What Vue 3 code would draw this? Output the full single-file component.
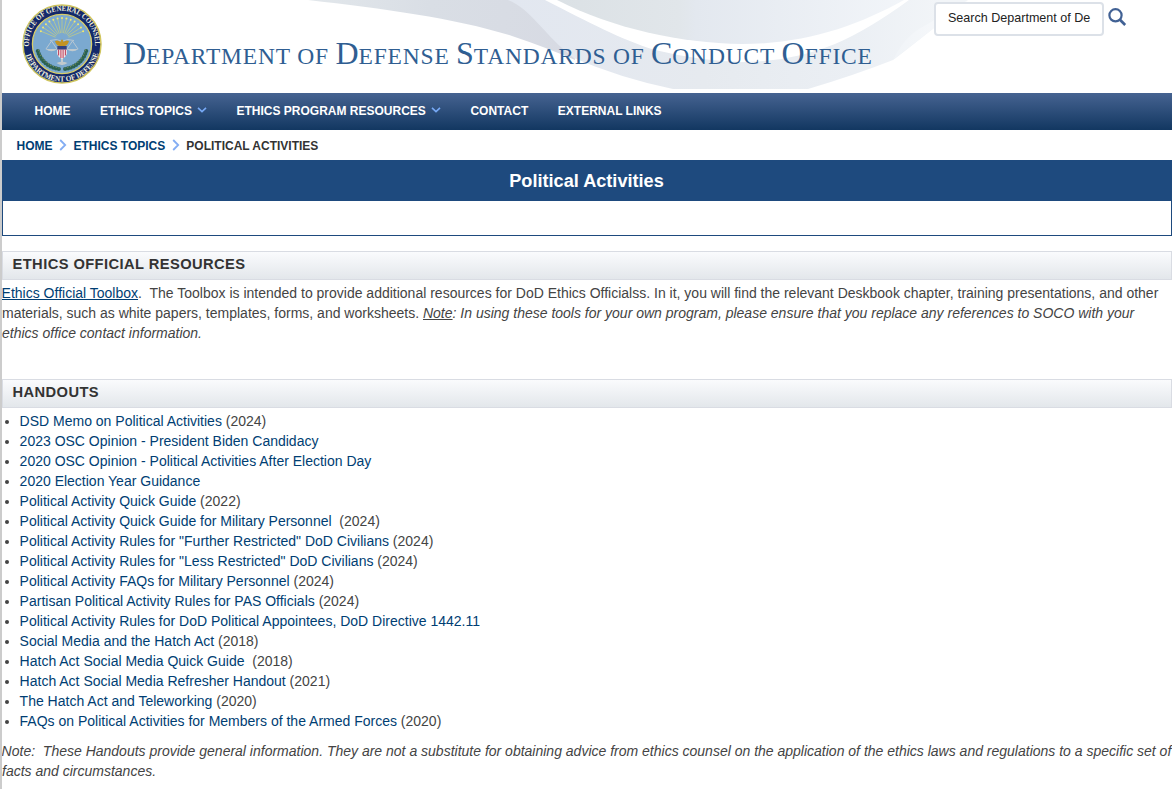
<script setup>
const nav = [
  { label: 'HOME' },
  { label: 'ETHICS TOPICS', menu: true },
  { label: 'ETHICS PROGRAM RESOURCES', menu: true },
  { label: 'CONTACT' },
  { label: 'EXTERNAL LINKS' },
]
const titleWords = [
  ['D', 'epartment'], ['', 'of'], ['D', 'efense'], ['S', 'tandards'], ['', 'of'], ['C', 'onduct'], ['O', 'ffice'],
]
const handouts = [
  ['DSD Memo on Political Activities', ' (2024)'],
  ['2023 OSC Opinion - President Biden Candidacy', ''],
  ['2020 OSC Opinion - Political Activities After Election Day', ''],
  ['2020 Election Year Guidance', ''],
  ['Political Activity Quick Guide', ' (2022)'],
  ['Political Activity Quick Guide for Military Personnel', '\u00a0 (2024)'],
  ['Political Activity Rules for "Further Restricted" DoD Civilians', ' (2024)'],
  ['Political Activity Rules for "Less Restricted" DoD Civilians', ' (2024)'],
  ['Political Activity FAQs for Military Personnel', ' (2024)'],
  ['Partisan Political Activity Rules for PAS Officials', ' (2024)'],
  ['Political Activity Rules for DoD Political Appointees, DoD Directive 1442.11', ''],
  ['Social Media and the Hatch Act', ' (2018)'],
  ['Hatch Act Social Media Quick Guide', '\u00a0 (2018)'],
  ['Hatch Act Social Media Refresher Handout', ' (2021)'],
  ['The Hatch Act and Teleworking', ' (2020)'],
  ['FAQs on Political Activities for Members of the Armed Forces', ' (2020)'],
]
const rays = Array.from({ length: 13 }, (_, i) => {
  const a = Math.PI * (1.13 + (i * 0.74) / 12)
  return {
    x1: 40 + 7 * Math.cos(a), y1: 36 + 7 * Math.sin(a),
    x2: 40 + 23 * Math.cos(a), y2: 36 + 22 * Math.sin(a),
  }
})
const leaves = Array.from({ length: 11 }, (_, i) => {
  const a = Math.PI * (0.54 + i * 0.037)
  return { x: 25.2 * Math.cos(a), y: 40 + 25.2 * Math.sin(a) }
})
</script>

<template>
  <div class="page">
    <header class="banner">
      <svg class="swoosh" width="700" height="93" viewBox="300 0 700 93">
        <defs>
          <linearGradient id="dark" x1="308" x2="575" y1="0" y2="40" gradientUnits="userSpaceOnUse">
            <stop offset="0" stop-color="#e2e7eb" /><stop offset=".45" stop-color="#d9dee5" /><stop offset="1" stop-color="#d7dae3" />
          </linearGradient>
          <linearGradient id="band" x1="510" x2="940" y1="0" y2="0" gradientUnits="userSpaceOnUse">
            <stop offset="0" stop-color="#e2e7f0" /><stop offset=".45" stop-color="#e6eaef" /><stop offset=".8" stop-color="#ebeff4" /><stop offset="1" stop-color="#f2f5f8" />
          </linearGradient>
          <linearGradient id="bowl" x1="557" x2="905" y1="0" y2="0" gradientUnits="userSpaceOnUse">
            <stop offset="0" stop-color="#dbe1e5" /><stop offset=".35" stop-color="#e1e6ea" /><stop offset=".4" stop-color="#e3e8ef" /><stop offset="1" stop-color="#f2f5f9" />
          </linearGradient>
          <linearGradient id="fade" x1="880" x2="968" y1="0" y2="0" gradientUnits="userSpaceOnUse">
            <stop offset="0" stop-color="#eff3f7" /><stop offset="1" stop-color="#f9fafc" />
          </linearGradient>
        </defs>
        <path d="M308 0C385 9 455 18 512 36Q545 47 575 60L572 30L512 0Z" fill="url(#dark)" />
        <path d="M508 0C530 8 545 36 574 58Q620 78 673 89H808Q855 75 893 60Q900 55 934 28L968 0Z" fill="url(#band)" />
        <path d="M893 60Q905 35 926 25L968 0L934 28Z" fill="url(#fade)" />
        <path d="M545 0C590 23 620 39 655 50Q700 61 742 62Q792 62 835 44Q868 30 909 0Z" fill="#fff" />
        <path d="M557 0C614 29 680 43 742 44C805 44 857 26 904 0Z" fill="url(#bowl)" />
      </svg>

      <svg class="seal" width="82" height="82" viewBox="-1 -1 82 82">
        <defs>
          <path id="topArc" d="M7.2 44A33.05 33.05 0 1 1 72.8 44" />
          <path id="bottomArc" d="M3.6 50A37.8 37.8 0 0 0 76.4 50" />
        </defs>
        <circle cx="40" cy="40" r="39" fill="#14296b" stroke="#cfc55e" stroke-width="1.5" />
        <circle cx="40" cy="40" r="29.6" fill="#7ba9d0" stroke="#d9ce69" stroke-width="1.3" />
        <line v-for="(r, i) in rays" :key="i" v-bind="r" class="ray" />
        <circle v-for="(r, i) in rays" :key="'s' + i" :cx="r.x2" :cy="r.y2" r="1" fill="#f5ea6c" />
        <g v-for="(l, i) in leaves" :key="'l' + i" fill="#2c6252">
          <circle :cx="40 + l.x" :cy="l.y" r="2.1" />
          <circle :cx="40 - l.x" :cy="l.y" r="2.1" />
          <circle :cx="40 + l.x * 0.97" :cy="l.y - 1" r=".6" fill="#86945a" />
          <circle :cx="40 - l.x * 0.97" :cy="l.y - 1" r=".6" fill="#86945a" />
        </g>
        <g fill="none" stroke="#c0cbd2" stroke-width=".9">
          <path d="M28 36.5Q34 34.5 40 37Q46 34.5 52 36.5M29.5 37L24 45M29.5 37L35 45M50.5 37L45 45M50.5 37L56 45" />
          <path d="M40 54V61" stroke-width="2" />
        </g>
        <path d="M23.5 45H35.5Q29.5 49.5 23.5 45M44.5 45H56.5Q50.5 49.5 44.5 45M34.5 59Q40 56.5 45.5 59Q40 63 34.5 59" fill="#c0c9cd" />
        <path d="M33 37Q36 35.5 38.5 38L39 36Q40 35 41 36L41.5 38Q44 35.5 47 37Q46 41 43 42H37Q34 41 33 37" fill="#c39322" />
        <path d="M35.2 42H44.8V50Q44 53 40 55Q36 53 35.2 50Z" fill="#f3e9ec" />
        <path d="M35.2 42H44.8V45.6H35.2Z" fill="#31417f" />
        <path d="M36.6 45.6V51.5M38.9 45.6V54M41.1 45.6V54M43.4 45.6V51.5" stroke="#c04760" stroke-width="1.1" />
        <text class="ring"><textPath href="#topArc" startOffset="1.5" textLength="108" lengthAdjust="spacingAndGlyphs">OFFICE OF GENERAL COUNSEL</textPath></text>
        <text class="ring"><textPath href="#bottomArc" startOffset="1" textLength="97" lengthAdjust="spacingAndGlyphs">DEPARTMENT OF DEFENSE</textPath></text>
      </svg>

      <h1 class="site-title"><template v-for="(w, i) in titleWords" :key="i">{{ i ? ' ' : '' }}{{ w[0] }}<span>{{ w[1] }}</span></template></h1>

      <div class="search">
        <div class="field"><span>Search Department of De</span></div>
        <svg width="20" height="20" viewBox="0 0 20 20" fill="none" stroke="#416194">
          <circle cx="7.5" cy="7.3" r="6.1" stroke-width="2.2" />
          <path d="M12 11.8L17.2 17" stroke-width="2.7" />
        </svg>
      </div>
    </header>

    <nav class="nav">
      <a v-for="n in nav" :key="n.label">{{ n.label }}<svg v-if="n.menu" width="10" height="6" viewBox="0 0 10 6"><path d="M1 .8L5 4.6L9 .8" fill="none" stroke="#77a9f6" stroke-width="1.6" /></svg></a>
    </nav>

    <div class="crumbs">
      <a>HOME</a>
      <svg width="8" height="12" viewBox="0 0 8 12"><path d="M1.2 1L6.2 6L1.2 11" /></svg>
      <a>ETHICS TOPICS</a>
      <svg width="8" height="12" viewBox="0 0 8 12"><path d="M1.2 1L6.2 6L1.2 11" /></svg>
      <span>POLITICAL ACTIVITIES</span>
    </div>

    <section class="title-box"><h2>Political Activities</h2></section>

    <h3 class="bar">ETHICS OFFICIAL RESOURCES</h3>
    <p class="intro"><a class="u">Ethics Official Toolbox</a>.&nbsp; The Toolbox is intended to provide additional resources for DoD Ethics Officialss. In it, you will find the relevant Deskbook chapter, training presentations, and other<br>materials, such as white papers, templates, forms, and worksheets. <em><u>Note</u>: In using these tools for your own program, please ensure that you replace any references to SOCO with your<br>ethics office contact information.</em></p>

    <h3 class="bar">HANDOUTS</h3>
    <ul>
      <li v-for="h in handouts" :key="h[0]"><a>{{ h[0] }}</a>{{ h[1] }}</li>
    </ul>
    <p class="note"><em>Note:&nbsp; These Handouts provide general information. They are not a substitute for obtaining advice from ethics counsel on the application of the ethics laws and regulations to a specific set of<br>facts and circumstances.</em></p>
  </div>
</template>

<style>
html, body { margin: 0; overflow: hidden; }
</style>

<style scoped>
.page {
  box-sizing: border-box;
  width: 1172px;
  height: 789px;
  overflow: hidden;
  border-left: 2px solid #ccc;
  background: #fff;
  color: #444;
  font: 14px/20px "Liberation Sans", Arial, sans-serif;
}
.banner {
  position: relative;
  display: flex;
  align-items: flex-start;
  height: 93px;
}
.swoosh { position: absolute; left: 298px; top: 0; }
.seal { position: relative; margin: 3px 0 0 19px; flex: none; }
.ray { stroke: #c9cf7c; stroke-width: .7; }
.ring {
  font: bold 7.8px "Liberation Serif", serif;
  fill: #f1efdc;
}
.site-title {
  position: relative;
  margin: 34px 0 0 20px;
  width: 780px;
  color: #2f5e92;
  font: 400 32px/38px "Liberation Serif", "Times New Roman", serif;
  word-spacing: -1.6px;
  white-space: nowrap;
}
.site-title span {
  font-size: 23.5px;
  letter-spacing: .82px;
  text-transform: uppercase;
}
.search {
  position: absolute;
  right: 44px;
  top: 2px;
  display: flex;
  gap: 4px;
}
.search svg { margin-top: 6px; }
.field {
  box-sizing: border-box;
  width: 170px;
  height: 34px;
  padding: 0 12px;
  border: 2px solid #dce1e8;
  border-radius: 4px;
  background: #fff;
  color: #222;
  font-size: 12.55px;
  line-height: 29px;
  white-space: nowrap;
}
.nav {
  display: flex;
  gap: 29.6px;
  height: 37px;
  padding-left: 32.5px;
  background: linear-gradient(#466391, #123761);
  color: #fff;
  font-size: 12px;
  font-weight: 700;
  line-height: 36px;
  white-space: nowrap;
}
.nav svg { margin: 0 0 2px 5px; }
.crumbs {
  display: flex;
  align-items: center;
  height: 30px;
  padding: 1px 0 0 14.5px;
  box-sizing: border-box;
  font-size: 12px;
  font-weight: 700;
  color: #333;
}
.crumbs svg { margin: 0 6.5px 2px 6.5px; fill: none; stroke: #84adf3; stroke-width: 1.8; }
a { color: #003e73; }
.nav a { color: #fff; }
.title-box {
  box-sizing: border-box;
  height: 76px;
  border: 1px solid #1e4a7e;
}
.title-box h2 {
  margin: 0;
  padding-right: 1px;
  height: 40px;
  background: #1e4a7e;
  color: #fff;
  font-size: 18.15px;
  line-height: 40px;
  text-align: center;
}
.bar {
  box-sizing: border-box;
  height: 29px;
  margin: 15px 0 3px;
  padding-left: 9.5px;
  border: 1px solid #d9dce3;
  background: linear-gradient(#fafbfd, #e3e7eb);
  color: #333;
  font-size: 14.7px;
  line-height: 25px;
  letter-spacing: .42px;
}
p { margin: 0; white-space: nowrap; }
.u { text-decoration: underline; }
.intro { margin-bottom: 36px; }
.intro, .note { text-indent: -.4px; }
ul { margin: 0 0 10px; padding-left: 17.6px; list-style: none; }
li { position: relative; }
li::before {
  content: "";
  position: absolute;
  left: -14.4px;
  top: 9px;
  width: 4px;
  height: 4px;
  border-radius: 50%;
  background: #444;
}
</style>
